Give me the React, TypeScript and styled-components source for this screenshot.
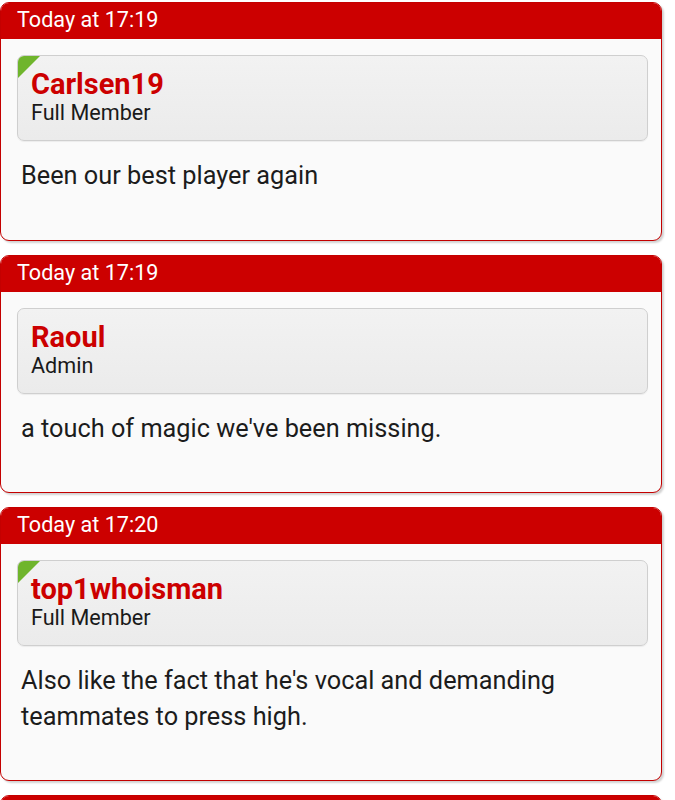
import styled, { createGlobalStyle } from "styled-components";

const GlobalStyle = createGlobalStyle`
	body {
		margin: 0;
		background: #ffffff;
		font-family: Roboto, "Noto Sans", "Liberation Sans", sans-serif;
	}
`;

const Thread = styled.div`
	display: flex;
	flex-direction: column;
	gap: 14px;
	padding: 2px 13px 0 0;
`;

const Post = styled.article`
	border: 1.5px solid #c40000;
	border-radius: 9px;
	background: #fafafa;
	overflow: hidden;
	box-shadow: 2px 2px 2px rgba(0, 0, 0, 0.18);
`;

const PostHeader = styled.header`
	height: 36px;
	background: #cc0000;
	color: #ffffff;
	font-size: 21.6px;
	line-height: 34px;
	padding: 0 16px;
`;

const PostBody = styled.div`
	padding: 16px 13px 46px 16px;
`;

const UserCard = styled.div`
	position: relative;
	height: 86px;
	border: 1px solid #cfcfcf;
	border-radius: 7px;
	background: linear-gradient(to bottom, #f2f2f2, #ebebeb);
	box-shadow: 0 1px 1px rgba(0, 0, 0, 0.06);
	padding: 12px 13px 0;
	box-sizing: border-box;
	overflow: hidden;
`;

const OnlineFlag = styled.span`
	position: absolute;
	top: 0;
	left: 0;
	width: 0;
	height: 0;
	border-top: 22px solid #6fb52c;
	border-right: 22px solid transparent;
`;

const UserName = styled.div`
	color: #cc0000;
	font-weight: 700;
	font-size: 29px;
	line-height: 33px;
`;

const UserTitle = styled.div`
	color: #1a1a1a;
	font-size: 21.6px;
	line-height: 24px;
`;

const Message = styled.p`
	margin: 17px 0 0 4px;
	color: #1c1c1c;
	font-size: 25.3px;
	line-height: 35.5px;
`;

interface PostData {
	time: string;
	user: string;
	title: string;
	online: boolean;
	text: string;
}

const posts: PostData[] = [
	{
		time: "Today at 17:19",
		user: "Carlsen19",
		title: "Full Member",
		online: true,
		text: "Been our best player again",
	},
	{
		time: "Today at 17:19",
		user: "Raoul",
		title: "Admin",
		online: false,
		text: "a touch of magic we've been missing.",
	},
	{
		time: "Today at 17:20",
		user: "top1whoisman",
		title: "Full Member",
		online: true,
		text: "Also like the fact that he's vocal and demanding teammates to press high.",
	},
	{
		time: "",
		user: "",
		title: "",
		online: false,
		text: "",
	},
];

function PostItem({ post }: { post: PostData }) {
	return (
		<Post>
			<PostHeader>{post.time}</PostHeader>
			<PostBody>
				<UserCard>
					{post.online && <OnlineFlag />}
					<UserName>{post.user}</UserName>
					<UserTitle>{post.title}</UserTitle>
				</UserCard>
				<Message>{post.text}</Message>
			</PostBody>
		</Post>
	);
}

export default function App() {
	return (
		<>
			<GlobalStyle />
			<Thread>
				{posts.map((post, i) => (
					<PostItem key={i} post={post} />
				))}
			</Thread>
		</>
	);
}
